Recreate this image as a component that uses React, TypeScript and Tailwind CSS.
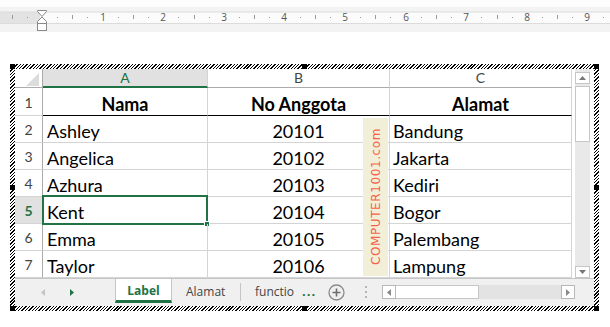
import React from "react";

const GREEN = "#217346";

const rows = [
  { row: 2, nama: "Ashley", no: "20101", alamat: "Bandung" },
  { row: 3, nama: "Angelica", no: "20102", alamat: "Jakarta" },
  { row: 4, nama: "Azhura", no: "20103", alamat: "Kediri" },
  { row: 5, nama: "Kent", no: "20104", alamat: "Bogor" },
  { row: 6, nama: "Emma", no: "20105", alamat: "Palembang" },
  { row: 7, nama: "Taylor", no: "20106", alamat: "Lampung" },
];

// word-style horizontal ruler, one unit = ~60.6px, zero at the indent marker
function Ruler() {
  const unit = 60.6;
  const origin = 42;
  const marks: React.ReactNode[] = [];
  for (let q = -2; q <= 38; q++) {
    const x = Math.round(origin + (q * unit) / 4);
    if (x > 606 || q === 0) continue;
    if (q % 4 === 0) {
      marks.push(
        <text key={q} x={x} y={21} textAnchor="middle" fontSize={10} fill="#555" fontFamily="Open Sans, sans-serif">
          {q / 4}
        </text>
      );
    } else if (q % 2 === 0) {
      marks.push(<rect key={q} x={x} y={15} width={1} height={4} fill="#9a9a9a" />);
    } else {
      marks.push(<rect key={q} x={x} y={17} width={1} height={1} fill="#9a9a9a" />);
    }
  }
  return (
    <svg width={610} height={32} className="block">
      <rect x={0} y={0} width={610} height={7} fill="#fdfdfd" />
      <rect x={0} y={7} width={610} height={25} fill="#f3f3f3" />
      <rect x={0} y={12} width={610} height={11} fill="#fbfbfb" />
      <rect x={0} y={12} width={40} height={11} fill="#e3e3e3" />
      <rect x={0} y={11.5} width={610} height={1} fill="#dcdcdc" />
      <rect x={0} y={23} width={610} height={1} fill="#dcdcdc" />
      {marks}
      {/* indent markers */}
      <path d="M37.5 10.5H46.5V11.5L42 16.5L37.5 11.5Z" fill="#fff" stroke="#8a8a8a" />
      <path d="M42 17L46.5 21.5V23.5H37.5V21.5Z" fill="#fff" stroke="#8a8a8a" />
      <rect x={37.5} y={23.5} width={9} height={7} fill="#fff" stroke="#8a8a8a" />
    </svg>
  );
}

function Tri({ dir, color }: { dir: "up" | "down" | "left" | "right"; color: string }) {
  const d = {
    up: "M0 4L3.5 0L7 4Z",
    down: "M0 0L7 0L3.5 4Z",
    left: "M4 0L4 7L0 3.5Z",
    right: "M0 0L4 3.5L0 7Z",
  }[dir];
  const w = dir === "up" || dir === "down" ? 7 : 4;
  const h = dir === "up" || dir === "down" ? 4 : 7;
  return (
    <svg width={w} height={h} className="block">
      <path d={d} fill={color} />
    </svg>
  );
}

function Handle({ className }: { className: string }) {
  return <div className={"absolute h-[5px] w-[5px] bg-black " + className} />;
}

function ColumnHeaders() {
  return (
    <div className="flex h-[19px] text-[14px] leading-none text-[#444]">
      <div className="relative w-[28px] border-r border-b border-[#ababab] bg-white">
        <div className="absolute right-[3px] bottom-[1px] h-0 w-0 border-b-[13px] border-l-[13px] border-b-[#dcdcdc] border-l-transparent" />
      </div>
      <div className="flex w-[165px] items-center justify-center border-r border-b-2 border-r-[#d4d4d4] border-b-[#217346] bg-[#e1e1e1] text-[#217346]">
        A
      </div>
      <div className="flex w-[182px] items-center justify-center border-r border-b border-r-[#d4d4d4] border-b-[#ababab] bg-white">
        B
      </div>
      <div className="flex w-[182px] items-center justify-center border-r border-b border-r-[#d4d4d4] border-b-[#ababab] bg-white">
        C
      </div>
    </div>
  );
}

function Sheet() {
  return (
    <div className="w-[557px] [font-family:Lato,sans-serif]">
      <ColumnHeaders />

      <div className="flex h-[28px] text-[18px] font-bold text-black">
        <div className="flex w-[28px] items-end justify-center border-r border-b border-r-[#ababab] border-b-[#d4d4d4] pb-[5px] text-[14px] font-normal leading-none text-[#444]">
          1
        </div>
        <div className="flex w-[165px] items-end justify-center border-r border-b border-r-[#d4d4d4] border-b-black pb-px leading-[20px]">
          Nama
        </div>
        <div className="flex w-[182px] items-end justify-center border-r border-b border-r-[#d4d4d4] border-b-black pb-px leading-[20px]">
          No Anggota
        </div>
        <div className="flex w-[182px] items-end justify-center border-r border-b border-r-[#d4d4d4] border-b-black pb-px leading-[20px]">
          Alamat
        </div>
      </div>

      {rows.map((r) => {
        const active = r.row === 5;
        return (
          <div key={r.row} className="flex h-[27px] text-[18px] text-black">
            <div
              className={
                active
                  ? "flex w-[28px] items-end justify-center border-r border-b border-r-[#217346] border-b-[#d4d4d4] bg-[#e1e1e1] pb-[5px] text-[14px] font-bold leading-none text-[#217346]"
                  : "flex w-[28px] items-end justify-center border-r border-b border-r-[#ababab] border-b-[#d4d4d4] pb-[5px] text-[14px] leading-none text-[#444]"
              }
            >
              {r.row}
            </div>
            <div className="relative flex w-[165px] items-end border-r border-b border-[#d4d4d4] pb-px pl-[4px] leading-[20px]">
              {r.nama}
              {active && (
                <>
                  <div className="absolute -top-[2px] -left-px -right-px -bottom-[2px] border-2 border-[#217346]" />
                  <div className="absolute -right-[3px] -bottom-[4px] h-[6px] w-[6px] border border-white bg-[#217346]" />
                </>
              )}
            </div>
            <div className="flex w-[182px] items-end justify-center border-r border-b border-[#d4d4d4] pb-px leading-[20px]">
              {r.no}
            </div>
            <div className="flex w-[182px] items-end border-r border-b border-[#d4d4d4] pb-px pl-[3px] leading-[20px]">
              {r.alamat}
            </div>
          </div>
        );
      })}
    </div>
  );
}

function VScroll() {
  return (
    <div className="ml-[3px] mr-[4px] flex w-[15px] flex-col bg-[#e9e9e9] pt-[3px]">
      <div className="flex h-[12px] items-center justify-center border border-[#c6c6c6] bg-white">
        <Tri dir="up" color="#777" />
      </div>
      <div className="mt-[2px] h-[56px] border border-[#c6c6c6] bg-white" />
      <div className="flex-1" />
      <div className="flex h-[12px] items-center justify-center border border-[#c6c6c6] bg-white">
        <Tri dir="down" color="#777" />
      </div>
    </div>
  );
}

function TabBar() {
  return (
    <div className="flex h-[28px] items-start border-t border-[#c6c6c6] bg-[#f0f0f0] text-[12px] text-[#444] [font-family:'Open_Sans',sans-serif]">
      <div className="flex h-[26px] w-[100px] items-center">
        <div className="ml-[26px]">
          <Tri dir="left" color="#c4c4c4" />
        </div>
        <div className="ml-[25px]">
          <Tri dir="right" color={GREEN} />
        </div>
      </div>
      <div className="flex h-[24px] w-[57px] items-center justify-center border-x border-b-[3px] border-x-[#c6c6c6] border-b-[#217346] bg-white pt-[2px] font-bold text-[#217346]">
        Label
      </div>
      <div className="mt-[4px] flex h-[18px] w-[69px] items-center border-r border-[#c6c6c6] pl-[14px]">Alamat</div>
      <div className="ml-[14px] flex h-[26px] items-center">functio</div>
      <div className="ml-[8px] flex h-[26px] items-center text-[13px] font-bold tracking-[1px] text-[#217346]">...</div>
      <div className="ml-[12px] flex h-[26px] items-center">
        <svg width={17} height={17} viewBox="0 0 17 17" className="block">
          <circle cx={8.5} cy={8.5} r={7.5} fill="none" stroke="#8a8a8a" strokeWidth={1.3} />
          <path d="M8.5 4.5V12.5M4.5 8.5H12.5" stroke="#6e6e6e" strokeWidth={1.6} />
        </svg>
      </div>
      <div className="ml-[20px] mt-[7px] flex flex-col gap-[3px]">
        <div className="h-[2px] w-[2px] bg-[#b5b5b5]" />
        <div className="h-[2px] w-[2px] bg-[#b5b5b5]" />
        <div className="h-[2px] w-[2px] bg-[#b5b5b5]" />
      </div>
      <div className="ml-[15px] mt-[6px] flex h-[14px] w-[193px] bg-[#e3e3e3]">
        <div className="flex w-[14px] items-center justify-center border border-[#b8b8b8] bg-white">
          <Tri dir="left" color="#8a8a8a" />
        </div>
        <div className="w-[83px] border border-l-0 border-[#c6c6c6] bg-white" />
        <div className="flex-1" />
        <div className="flex w-[14px] items-center justify-center border border-[#b8b8b8] bg-white">
          <Tri dir="right" color="#8a8a8a" />
        </div>
      </div>
    </div>
  );
}

function Workbook() {
  return (
    <div className="relative ml-[10px] w-[589px] bg-[repeating-linear-gradient(135deg,#000_0_1px,#fff_1px_2.4px)] p-[5px]">
      <Handle className="left-0 top-0" />
      <Handle className="right-0 top-0" />
      <Handle className="left-0 bottom-0" />
      <Handle className="right-0 bottom-0" />
      <Handle className="left-[292px] top-0" />
      <Handle className="left-[292px] bottom-0" />
      <Handle className="left-0 top-[121px]" />
      <Handle className="right-0 top-[121px]" />

      <div className="relative bg-white">
        <div className="flex">
          <Sheet />
          <VScroll />
        </div>
        <TabBar />

        {/* site watermark over column B/C */}
        <div className="absolute left-[348px] top-[49px] flex h-[158px] w-[25px] items-center justify-center bg-[#f2efd8]">
          <span className="rotate-180 text-[12px] tracking-[0.6px] text-[#f4634a] [writing-mode:vertical-rl] [font-family:'DejaVu_Sans',sans-serif]">
            COMPUTER1001.com
          </span>
        </div>
      </div>
    </div>
  );
}

export default function App() {
  return (
    <div className="h-[327px] w-[610px] overflow-hidden bg-white">
      <Ruler />
      <div className="mt-[32px]">
        <Workbook />
      </div>
    </div>
  );
}
